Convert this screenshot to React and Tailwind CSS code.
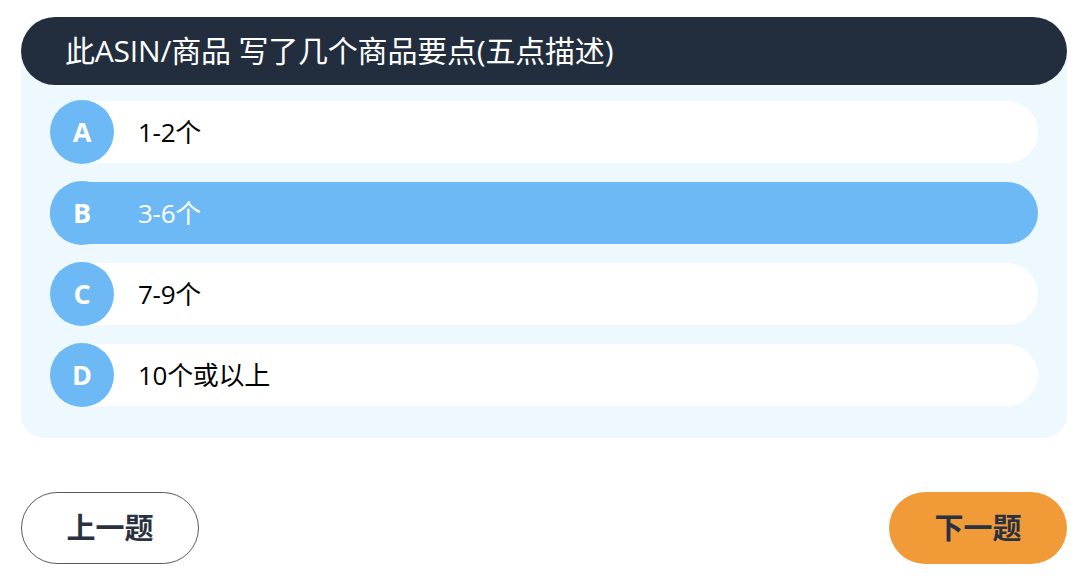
import { useState } from 'react'

const options = [
  { key: 'A', label: '1-2个' },
  { key: 'B', label: '3-6个' },
  { key: 'C', label: '7-9个' },
  { key: 'D', label: '10个或以上' },
]

export default function App() {
  const [selected, setSelected] = useState('B')

  return (
    <div className="min-h-screen bg-white pl-[21px] pr-[13px] pt-[17px] font-['Open_Sans','Noto_Sans_CJK_SC',sans-serif]">
      {/* Question */}
      <div className="relative z-10 h-[68px] rounded-full bg-[#222e3e] pl-[44px] flex items-center">
        <h1 className="text-[30px] text-white leading-none tracking-[-0.2px]">此ASIN/商品 写了几个商品要点(五点描述)</h1>
      </div>

      {/* Options */}
      <div className="-mt-[34px] pt-[50px] pb-[32px] px-[29px] bg-[#eef8ff] rounded-b-[24px] flex flex-col gap-[19px]">
        {options.map((o) => {
          const active = selected === o.key
          return (
            <button
              key={o.key}
              onClick={() => setSelected(o.key)}
              className={`h-[62px] rounded-full flex items-center gap-[24px] text-left ${
                active ? 'bg-[#6cb9f5] text-white' : 'bg-white text-black'
              }`}
            >
              <span className="w-[64px] h-[64px] shrink-0 rounded-full bg-[#6cb9f5] flex items-center justify-center text-white text-[27px] font-bold">
                {o.key}
              </span>
              <span className="text-[26px] tracking-[-0.3px]">{o.label}</span>
            </button>
          )
        })}
      </div>

      {/* Nav */}
      <div className="mt-[54px] flex justify-between">
        <button className="w-[178px] h-[72px] rounded-full border border-[#555b66] bg-white text-[29px] font-bold text-[#2a3140]">
          上一题
        </button>
        <button className="w-[178px] h-[72px] rounded-full bg-[#f09b37] text-[29px] font-bold text-[#2a3140]">
          下一题
        </button>
      </div>
    </div>
  )
}
